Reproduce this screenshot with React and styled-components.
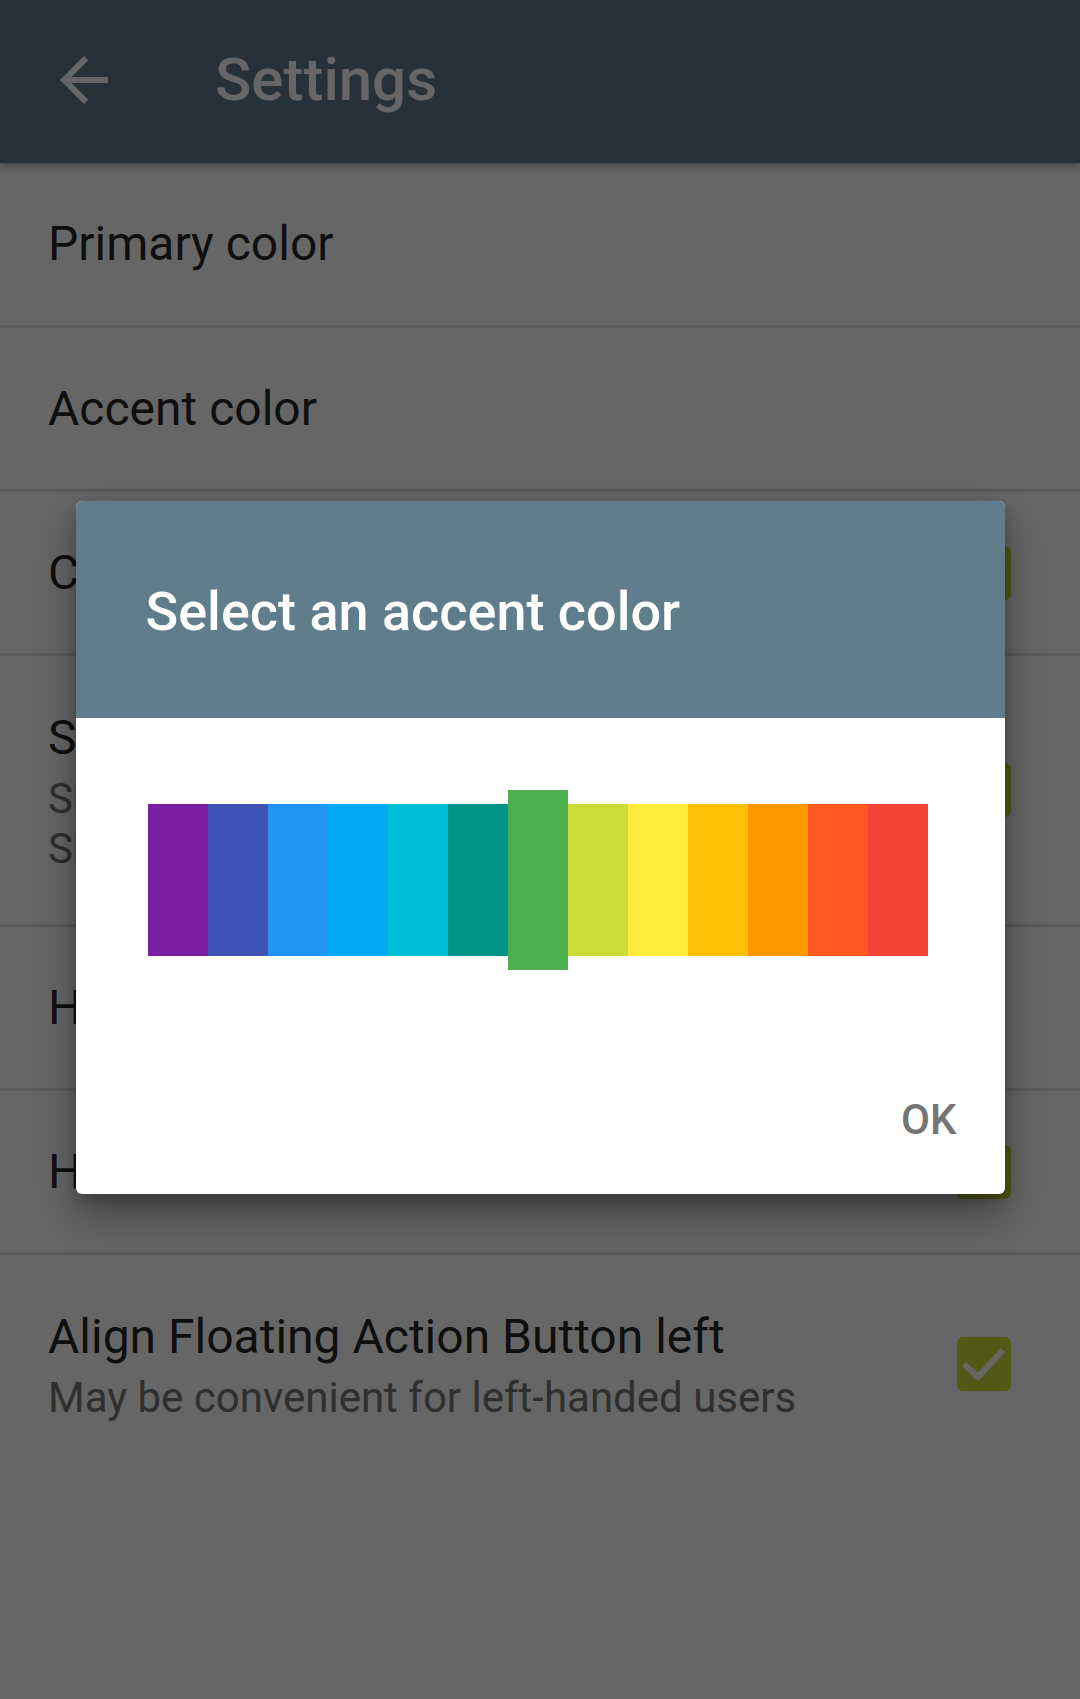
import React from 'react';
import styled, { createGlobalStyle } from 'styled-components';

const swatches = [
  '#7B1FA2', '#3F51B5', '#2196F3', '#03A9F4', '#00BCD4', '#009688', '#4CAF50',
  '#CDDC39', '#FFEB3B', '#FFC107', '#FF9800', '#FF5722', '#F44336',
];

const settings = [
  { title: 'Primary color' },
  { title: 'Accent color' },
  { title: 'Colored bar', checked: true },
  {
    title: 'Show task details',
    summary: ['Show notes and due dates', 'Shown below each task title'],
    checked: true,
  },
  { title: 'Hide completed tasks' },
  { title: 'Hide the toolbar', checked: true },
  { title: 'Align Floating Action Button left', summary: ['May be convenient for left-handed users'], checked: true },
];

const App = () => {
  return (
    <Page>
      <GlobalStyle />
      <Toolbar>
        <BackButton aria-label="Back">
          <svg width="72" height="72" viewBox="0 0 24 24">
            <path fill="#fff" d="M20 11H7.83l5.59-5.59L12 4l-8 8 8 8 1.41-1.41L7.83 13H20v-2z" />
          </svg>
        </BackButton>
        <ToolbarTitle>Settings</ToolbarTitle>
      </Toolbar>

      <List>
        {settings.map((s, i) => (
          <Row key={i} $tall={!!s.summary}>
            <RowText>
              <RowTitle>{s.title}</RowTitle>
              {s.summary && (
                <RowSummary>
                  {s.summary.map((line, j) => (
                    <span key={j}>{line}</span>
                  ))}
                </RowSummary>
              )}
            </RowText>
            {s.checked && (
              <Checkbox>
                <svg width="54" height="54" viewBox="0 0 54 54">
                  <path d="M7 27 L21 40 L46 13" fill="none" stroke="#fff" strokeWidth="6" />
                </svg>
              </Checkbox>
            )}
          </Row>
        ))}
      </List>

      <Overlay>
        <Dialog>
          <DialogHeader>
            <DialogTitle>Select an accent color</DialogTitle>
          </DialogHeader>
          <DialogBody>
            <SwatchRow>
              {swatches.map((c, i) => (
                <Swatch key={c} $color={c} $selected={i === 6} />
              ))}
            </SwatchRow>
            <Actions>
              <TextButton>OK</TextButton>
            </Actions>
          </DialogBody>
        </Dialog>
      </Overlay>
    </Page>
  );
};

export default App;

const GlobalStyle = createGlobalStyle`
  html, body {
    margin: 0;
    padding: 0;
    background: #fff;
  }
  * {
    box-sizing: border-box;
  }
  body {
    font-family: Roboto, 'Noto Sans', sans-serif;
  }
`;

const Page = styled.div`
  position: relative;
  width: 1080px;
  height: 1699px;
  overflow: hidden;
  background: #fff;
`;

const Toolbar = styled.header`
  display: flex;
  align-items: center;
  height: 163px;
  padding-left: 48px;
  padding-bottom: 4px;
  background: #607d8b;
  box-shadow: 0 4px 8px rgba(0, 0, 0, 0.28);
  position: relative;
  z-index: 1;
`;

const BackButton = styled.div`
  width: 72px;
  height: 72px;
  display: flex;
  svg {
    display: block;
  }
`;

const ToolbarTitle = styled.h1`
  margin: 0 0 0 95px;
  font-size: 60px;
  font-weight: 500;
  color: #fff;
  line-height: 72px;
`;

const List = styled.div`
  display: flex;
  flex-direction: column;
`;

const Row = styled.div`
  display: flex;
  align-items: center;
  justify-content: space-between;
  min-height: 164px;
  padding: ${(p) => (p.$tall ? '50px' : '0')} 69px ${(p) => (p.$tall ? '50px' : '0')} 48px;
  &:first-child {
    min-height: 162px;
  }
  & + & {
    border-top: 3px solid #e0e0e0;
  }
`;

const RowText = styled.div`
  display: flex;
  flex-direction: column;
`;

const RowTitle = styled.div`
  font-size: 48px;
  line-height: 64px;
  color: rgba(0, 0, 0, 0.87);
`;

const RowSummary = styled.div`
  display: flex;
  flex-direction: column;
  margin-top: 4px;
  font-size: 42px;
  line-height: 50px;
  color: #757575;
`;

const Checkbox = styled.div`
  width: 54px;
  height: 54px;
  flex: none;
  border-radius: 6px;
  background: #cddc39;
  svg {
    display: block;
  }
`;

const Overlay = styled.div`
  position: absolute;
  inset: 0;
  z-index: 2;
  display: flex;
  align-items: center;
  justify-content: center;
  padding-bottom: 5px;
  background: rgba(0, 0, 0, 0.6);
`;

const Dialog = styled.div`
  width: 929px;
  border-radius: 6px;
  overflow: hidden;
  background: #fff;
  box-shadow: 0 22px 44px rgba(0, 0, 0, 0.32), 0 8px 16px rgba(0, 0, 0, 0.2);
`;

const DialogHeader = styled.div`
  height: 217px;
  padding: 75px 70px 0;
  background: #607d8b;
`;

const DialogTitle = styled.h2`
  margin: 0;
  font-size: 54px;
  line-height: 72px;
  font-weight: 500;
  color: #fff;
`;

const DialogBody = styled.div`
  display: flex;
  flex-direction: column;
  padding-top: 72px;
`;

const SwatchRow = styled.div`
  display: flex;
  align-items: center;
  height: 180px;
  margin-left: 72px;
`;

const Swatch = styled.div`
  width: 60px;
  height: ${(p) => (p.$selected ? '180px' : '152px')};
  background: ${(p) => p.$color};
`;

const Actions = styled.div`
  display: flex;
  justify-content: flex-end;
  padding: 126px 48px 50px 0;
`;

const TextButton = styled.div`
  font-size: 42px;
  line-height: 48px;
  font-weight: 500;
  color: #757575;
  text-transform: uppercase;
`;
